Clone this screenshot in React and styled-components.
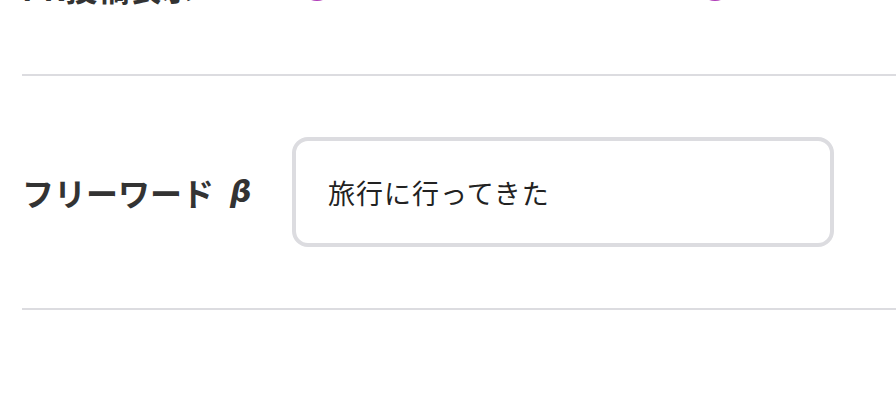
import React from "react";
import styled, { createGlobalStyle } from "styled-components";

const Global = createGlobalStyle`
  html, body { margin: 0; padding: 0; background: #fff; overflow: hidden; }
  body { font-family: "Noto Sans CJK JP", "Noto Sans", sans-serif; color: #333; }
`;

const Page = styled.div`
  padding-left: 22px;
  margin-top: -53px;
`;

const Row = styled.div`
  display: flex;
  align-items: ${(p) => p.$align || "center"};
  border-bottom: 2px solid #dcdce0;
  padding: ${(p) => p.$pad};
`;

const Label = styled.div`
  flex: 0 0 270px;
  font-size: 32px;
  font-weight: 700;
  color: #333;
  line-height: 36px;
  display: flex;
  align-items: center;
`;

const Beta = styled.span`
  font-family: "DejaVu Sans", sans-serif;
  font-style: italic;
  font-weight: 700;
  font-size: 30px;
  margin-left: 16px;
`;

const Radios = styled.div`
  display: flex;
  gap: 364px;
  padding-left: 8px;
  margin-bottom: 4px;
`;

const Radio = styled.span`
  display: block;
  width: 34px;
  height: 34px;
  border-radius: 50%;
  border: 3px solid #b03cb8;
  box-sizing: border-box;
  background: #fff;
`;

const Input = styled.div`
  width: 542px;
  height: 110px;
  box-sizing: border-box;
  border: 4px solid #dcdce0;
  border-radius: 16px;
  display: flex;
  align-items: center;
  padding-left: 32px;
  font-size: 27px;
  color: #222;
  letter-spacing: 1px;
`;

export default function App() {
  return (
    <>
      <Global />
      <Page>
        <Row $pad="20px 0 69px" $align="flex-end">
          <Label>PR投稿表示</Label>
          <Radios>
            <Radio aria-label="option 1" />
            <Radio aria-label="option 2" />
          </Radios>
        </Row>
        <Row $pad="61px 0">
          <Label>
            フリーワード<Beta>β</Beta>
          </Label>
          <Input>旅行に行ってきた</Input>
        </Row>
      </Page>
    </>
  );
}
